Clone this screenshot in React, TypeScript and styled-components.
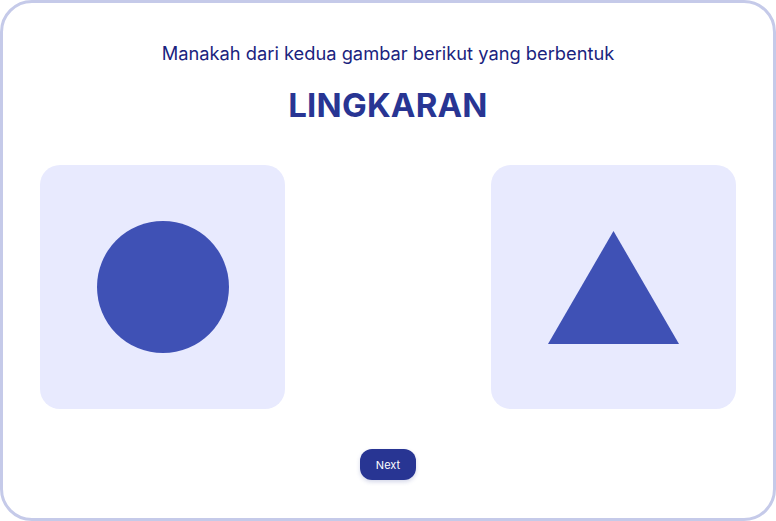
import React from "react";
import styled, { createGlobalStyle } from "styled-components";

const Global = createGlobalStyle`
  html, body { margin: 0; padding: 0; background: #ffffff; }
  body { font-family: Inter, "Noto Sans", sans-serif; }
  * { box-sizing: border-box; }
`;

const Frame = styled.div`
  width: 776px;
  height: 521px;
  border: 3px solid #c5cae9;
  border-radius: 32px;
  background: #ffffff;
  display: flex;
  flex-direction: column;
  align-items: center;
  padding: 38px 37px 0;
`;

const Question = styled.p`
  margin: 0;
  font-size: 18.3px;
  line-height: 24px;
  color: #1a237e;
  font-weight: 400;
`;

const Target = styled.h1`
  margin: 20px 0 0;
  font-size: 33px;
  line-height: 40px;
  font-weight: 700;
  color: #283593;
  letter-spacing: 0.2px;
`;

const Choices = styled.div`
  width: 100%;
  display: flex;
  justify-content: space-between;
  margin-top: 40px;
`;

const Card = styled.button`
  width: 245px;
  height: 244px;
  border: none;
  border-radius: 20px;
  background: #e8eafe;
  display: flex;
  align-items: center;
  justify-content: center;
  padding: 0;
  cursor: pointer;
`;

const Circle = styled.div`
  width: 132px;
  height: 132px;
  border-radius: 50%;
  background: #3f51b5;
`;

const NextButton = styled.button`
  margin-top: 40px;
  width: 56px;
  height: 31px;
  border: none;
  border-radius: 12px;
  background: #283593;
  color: #ffffff;
  font-family: Inter, "Noto Sans", sans-serif;
  font-size: 11px;
  font-weight: 400;
  box-shadow: 0 2px 4px rgba(40, 53, 147, 0.2);
  cursor: pointer;
`;

export default function App() {
  return (
    <>
      <Global />
      <Frame>
        <Question>Manakah dari kedua gambar berikut yang berbentuk</Question>
        <Target>LINGKARAN</Target>
        <Choices>
          <Card aria-label="Lingkaran">
            <Circle />
          </Card>
          <Card aria-label="Segitiga">
            <svg width="131" height="113" viewBox="0 0 131 113">
              <polygon points="65.5,0 131,113 0,113" fill="#3f51b5" />
            </svg>
          </Card>
        </Choices>
        <NextButton>Next</NextButton>
      </Frame>
    </>
  );
}
